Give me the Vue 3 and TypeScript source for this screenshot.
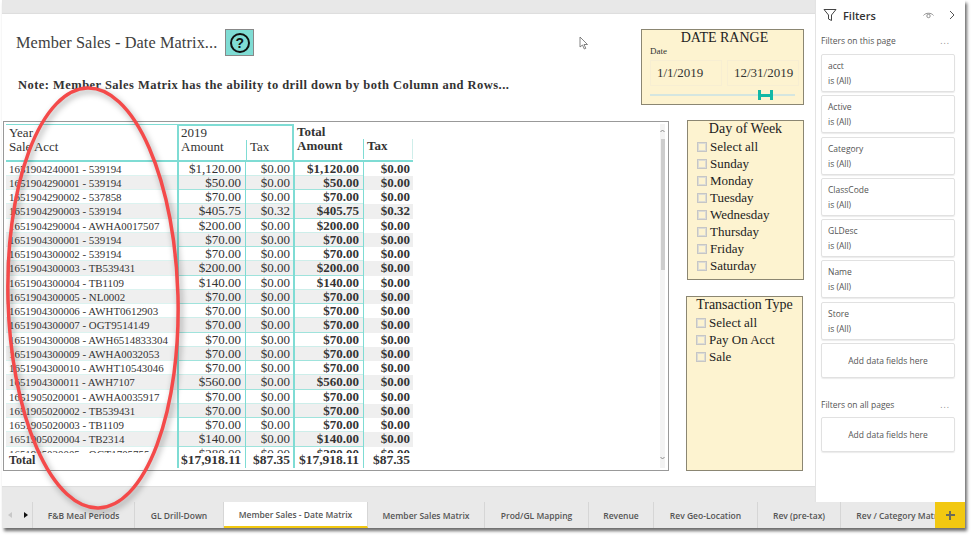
<script setup lang="ts">
interface SalesRow {
  label: string
  amount: string
  tax: string
}

interface TabItem {
  name: string
  width: number
  active?: boolean
}

const amounts: [string, string, string?][] = [
  ['1651904240001 - 539194', '$1,120.00'],
  ['1651904290001 - 539194', '$50.00'],
  ['1651904290002 - 537858', '$70.00'],
  ['1651904290003 - 539194', '$405.75', '$0.32'],
  ['1651904290004 - AWHA0017507', '$200.00'],
  ['1651904300001 - 539194', '$70.00'],
  ['1651904300002 - 539194', '$70.00'],
  ['1651904300003 - TB539431', '$200.00'],
  ['1651904300004 - TB1109', '$140.00'],
  ['1651904300005 - NL0002', '$70.00'],
  ['1651904300006 - AWHT0612903', '$70.00'],
  ['1651904300007 - OGT9514149', '$70.00'],
  ['1651904300008 - AWH6514833304', '$70.00'],
  ['1651904300009 - AWHA0032053', '$70.00'],
  ['1651904300010 - AWHT10543046', '$70.00'],
  ['1651904300011 - AWH7107', '$560.00'],
  ['1651905020001 - AWHA0035917', '$70.00'],
  ['1651905020002 - TB539431', '$70.00'],
  ['1651905020003 - TB1109', '$70.00'],
  ['1651905020004 - TB2314', '$140.00'],
  ['1651905020005 - OGT1705755', '$280.00'],
]

const rows: SalesRow[] = amounts.map(([label, amount, tax]) => ({
  label,
  amount,
  tax: tax ?? '$0.00',
}))

const days = ['Select all', 'Sunday', 'Monday', 'Tuesday', 'Wednesday', 'Thursday', 'Friday', 'Saturday']
const transactionTypes = ['Select all', 'Pay On Acct', 'Sale']
const filters = ['acct', 'Active', 'Category', 'ClassCode', 'GLDesc', 'Name', 'Store']

const tabs: TabItem[] = [
  { name: 'F&B Meal Periods', width: 102 },
  { name: 'GL Drill-Down', width: 89 },
  { name: 'Member Sales - Date Matrix', width: 144, active: true },
  { name: 'Member Sales Matrix', width: 117 },
  { name: 'Prod/GL Mapping', width: 104 },
  { name: 'Revenue', width: 65 },
  { name: 'Rev Geo-Location', width: 104 },
  { name: 'Rev (pre-tax)', width: 83 },
  { name: 'Rev / Category Matrix', width: 120 },
]
</script>

<template>
  <div class="shot">
    <div class="window">
      <div class="main">
        <section class="canvas">
          <div class="band"></div>
          <div class="page">
            <div class="top-row">
              <div class="heading">
                <div class="title-line">
                  <h1 class="title">Member Sales - Date Matrix...</h1>
                  <button type="button" class="help"><span class="help-ring">?</span></button>
                </div>
                <p class="note">Note: Member Sales Matrix has the ability to drill down by both Column and Rows...</p>
              </div>

              <div class="date-card">
                <div class="card-title">DATE RANGE</div>
                <div class="date-label">Date</div>
                <div class="date-inputs">
                  <span class="date-input">1/1/2019</span>
                  <span class="date-input">12/31/2019</span>
                </div>
                <div class="slider">
                  <span class="slider-handle"></span>
                </div>
              </div>
            </div>

            <div class="bottom-row">
              <div class="visual">
                <div class="matrix">
                  <div class="head">
                    <div class="h-label">
                      <span>Year</span>
                      <span>Sale Acct</span>
                    </div>
                    <div class="h-year">
                      <span class="h-year-name">2019</span>
                      <div class="h-pair">
                        <span class="h-amount">Amount</span>
                        <span class="h-tax">Tax</span>
                      </div>
                    </div>
                    <div class="h-total">
                      <span class="h-total-name">Total</span>
                      <div class="h-pair">
                        <span class="h-t-amount">Amount</span>
                        <span class="h-t-tax">Tax</span>
                      </div>
                    </div>
                  </div>

                  <div class="body">
                    <div v-for="(row, i) in rows" :key="row.label" class="row" :class="{ shade: i % 2 === 1 }">
                      <span class="c-label">{{ row.label }}</span>
                      <span class="c-amount">{{ row.amount }}</span>
                      <span class="c-tax">{{ row.tax }}</span>
                      <span class="c-t-amount">{{ row.amount }}</span>
                      <span class="c-t-tax">{{ row.tax }}</span>
                    </div>
                  </div>

                  <div class="row total">
                    <span class="c-label">Total</span>
                    <span class="c-amount">$17,918.11</span>
                    <span class="c-tax">$87.35</span>
                    <span class="c-t-amount">$17,918.11</span>
                    <span class="c-t-tax">$87.35</span>
                  </div>
                </div>

                <div class="scrollbar">
                  <svg class="arrow" width="5" height="4" viewBox="0 0 5 4"><path d="M.5 3 2.5 1 4.500 3" fill="none" stroke="#888" /></svg>
                  <span class="thumb"></span>
                  <svg class="arrow arrow-down" width="5" height="4" viewBox="0 0 5 4"><path d="M.5 1 2.5 3 4.500 1" fill="none" stroke="#888" /></svg>
                </div>
              </div>

              <div class="slicers">
                <div class="slicer day">
                  <div class="card-title">Day of Week</div>
                  <ul class="options">
                    <li v-for="day in days" :key="day"><i class="check"></i>{{ day }}</li>
                  </ul>
                </div>
                <div class="slicer type">
                  <div class="card-title">Transaction Type</div>
                  <ul class="options">
                    <li v-for="kind in transactionTypes" :key="kind"><i class="check"></i>{{ kind }}</li>
                  </ul>
                </div>
              </div>
            </div>
          </div>
          <div class="foot"></div>
        </section>

        <aside class="filters">
          <div class="filters-head">
            <svg width="14" height="14" viewBox="0 0 14 14" class="funnel">
              <path d="M1 1.500h12L8.500 7v5.500l-3-1.500V7Z" fill="none" stroke="#444" stroke-width="1" />
            </svg>
            <span class="filters-title">Filters</span>
            <svg width="11" height="8" viewBox="0 0 11 8" class="eye">
              <path d="M.5 4.500C2.500 1.500 8.500 1.500 10.500 4.500" fill="none" stroke="#777" stroke-width=".8" />
              <circle cx="5.500" cy="5" r="1.700" fill="none" stroke="#777" stroke-width=".8" />
            </svg>
            <svg width="6" height="10" viewBox="0 0 6 10" class="chevron">
              <path d="M1 1l4 4-4 4" fill="none" stroke="#555" stroke-width="1" />
            </svg>
          </div>

          <div class="section-line">
            <span>Filters on this page</span>
            <span class="dots">...</span>
          </div>
          <div class="filter-list">
            <div v-for="name in filters" :key="name" class="filter-card">
              <span>{{ name }}</span>
              <span>is (All)</span>
            </div>
            <div class="filter-card add">Add data fields here</div>
          </div>

          <div class="section-line all-pages">
            <span>Filters on all pages</span>
            <span class="dots">...</span>
          </div>
          <div class="filter-list">
            <div class="filter-card add">Add data fields here</div>
          </div>
        </aside>
      </div>

      <nav class="tabs">
        <div class="tab-nav">
          <i class="nav-left"></i>
          <i class="nav-right"></i>
        </div>
        <div class="tab-list">
          <div
            v-for="tab in tabs"
            :key="tab.name"
            class="tab"
            :class="{ active: tab.active }"
            :style="{ width: `${tab.width}px` }"
          >
            <span>{{ tab.name }}</span>
          </div>
        </div>
        <div class="add-tab">
          <span class="plus"></span>
        </div>
      </nav>
    </div>

    <!-- annotation drawn on top of the screenshot -->
    <svg class="ink" width="974" height="540" viewBox="0 0 974 540">
      <ellipse cx="93" cy="298" rx="85" ry="210" transform="rotate(-1.500 93 298)" fill="none" stroke="#f44a4a" stroke-width="3.500" />
    </svg>
    <svg class="cursor" width="10" height="14" viewBox="0 0 10 14">
      <path d="M1 1v10l2.500-2 1.800 4 1.500-.7-1.800-3.800H8.500Z" fill="#fff" stroke="#666" stroke-width=".8" />
    </svg>
  </div>
</template>

<style scoped>
.shot {
  position: relative;
  width: 974px;
  height: 540px;
  overflow: hidden;
  background: #fff;
  font-family: "Liberation Serif", "Times New Roman", serif;
  color: #333;
}

.window {
  width: 963px;
  height: 528px;
  margin-left: 2px;
  display: flex;
  flex-direction: column;
  box-shadow: 2px 3px 3px rgba(60, 60, 60, 0.75);
}

.main {
  display: flex;
  height: 502px;
}

.canvas {
  width: 813px;
  display: flex;
  flex-direction: column;
}

.band {
  height: 14px;
  background: #e8e8e8;
  box-shadow: inset 0 -1px 1px #ddd;
}

.page {
  height: 472px;
  padding-top: 15px;
  box-sizing: border-box;
  background: #fff;
}

.foot {
  height: 16px;
  background: #e9e9e9;
  box-shadow: inset 0 1px 1px #ddd;
}

.top-row {
  display: flex;
  justify-content: space-between;
  height: 76px;
  padding-right: 11px;
}

.heading {
  padding-left: 14px;
}

.title-line {
  display: flex;
  align-items: center;
  gap: 8px;
  height: 27px;
}

.title {
  margin: 0;
  font-size: 16.300px;
  font-weight: 400;
  color: #404040;
  letter-spacing: 0.1px;
}

.help {
  width: 29px;
  height: 27px;
  padding: 0;
  display: grid;
  place-items: center;
  background: #7fdcd4;
  border: 1px solid #888;
}

.help-ring {
  width: 16px;
  height: 16px;
  display: grid;
  place-items: center;
  border: 2px solid #111;
  border-radius: 50%;
  font: 700 14px/1 "Liberation Sans", Arial, sans-serif;
  color: #111;
}

.note {
  margin: 21px 0 0 2px;
  font-size: 12.500px;
  line-height: 16px;
  font-weight: 700;
  color: #333;
  letter-spacing: 0.46px;
  white-space: nowrap;
}

.date-card {
  width: 163px;
  box-sizing: border-box;
  padding: 0 4px 0 8px;
  background: #fdf3d0;
  border: 1px solid #8b8672;
}

.card-title {
  text-align: center;
  font-size: 14px;
  line-height: 15px;
  color: #222;
}

.date-label {
  font-size: 9px;
  line-height: 11px;
  margin-top: 1px;
  color: #333;
}

.date-inputs {
  display: flex;
  gap: 5px;
  margin-top: 3px;
}

.date-input {
  flex: 1;
  height: 26px;
  box-sizing: border-box;
  border: 1px solid #f7eed2;
  padding-left: 6px;
  font-size: 13px;
  line-height: 24px;
  color: #333;
  white-space: nowrap;
}

.slider {
  position: relative;
  height: 2px;
  width: 145px;
  margin-top: 8px;
  background: #d5e6e0;
}

.slider-handle {
  position: absolute;
  left: 108px;
  top: -4px;
  width: 9px;
  height: 10px;
  border-left: 3px solid #12b8a6;
  border-right: 3px solid #12b8a6;
  background: linear-gradient(#12b8a6, #12b8a6) center / 100% 3px no-repeat;
}

.bottom-row {
  display: flex;
  margin-top: 15px;
}

.visual {
  display: flex;
  width: 666px;
  height: 350px;
  margin: 1px 0 0 1px;
  padding: 2px 3px 2px 2px;
  box-sizing: border-box;
  border: 1.500px solid #999;
  background: #fff;
}

.matrix {
  width: 407px;
  display: flex;
  flex-direction: column;
  font-size: 13px;
  color: #333;
}

.head {
  display: grid;
  grid-template-columns: 171px 116px 120px;
  height: 35.500px;
  border-bottom: 2px solid #7fdcd4;
  box-sizing: content-box;
}

.h-label {
  display: flex;
  flex-direction: column;
  padding: 1px 0 0 3px;
  border-top: 1px solid #7fdcd4;
  line-height: 14px;
}

.h-year {
  border-top: 2px solid #7fdcd4;
  border-left: 2px solid #7fdcd4;
  border-right: 2px solid #7fdcd4;
  margin-right: -1px;
}

.h-year-name,
.h-total-name {
  display: block;
  height: 14px;
  line-height: 13px;
  padding-left: 2px;
}

.h-total {
  font-weight: 700;
  padding-top: 1px;
  margin-left: 1px;
}

.h-total-name,
.h-t-amount {
  padding-left: 3px;
}

.h-pair {
  display: flex;
  height: 19.500px;
  line-height: 14px;
}

.h-amount {
  padding-left: 2px;
  box-sizing: border-box;
  width: 67px;
}

.h-t-amount {
  box-sizing: border-box;
  width: 69px;
}

.h-tax,
.h-t-tax {
  padding-left: 3px;
  border-left: 1px solid #7fdcd4;
  box-sizing: border-box;
}

.h-tax {
  flex: 1;
}

.h-t-tax {
  flex: 1;
  border-right: 1px solid #cfeeea;
}

.body {
  height: 292px;
  overflow: hidden;
}

.row {
  display: grid;
  grid-template-columns: 171px 68px 48px 70px 50px;
  height: 14.250px;
  line-height: 14px;
  box-sizing: border-box;
  white-space: nowrap;
}

.row span {
  padding-right: 3px;
  text-align: right;
  box-shadow: inset 0 -1px 0 #cdeeea;
}

.row.shade span {
  background: #efefef;
  box-shadow: inset 0 -1px 0 #9fe3dc;
}

.row .c-label,
.row.shade .c-label {
  padding-left: 3px;
  text-align: left;
  font-size: 10.900px;
  box-shadow: inset 0 -1px 0 #dcf3f0;
}

.row .c-amount {
  border-left: 2px solid #7fdcd4;
  padding-right: 4px;
}

.row .c-tax {
  border-left: 1px solid #7fdcd4;
}

.row .c-t-amount {
  border-left: 2px solid #7fdcd4;
  padding-right: 4px;
  font-weight: 700;
}

.row .c-t-tax,
.row.shade .c-t-tax {
  border-left: 1px solid #7fdcd4;
  font-weight: 700;
  box-shadow: none;
}

.row.total {
  height: 15px;
  font-weight: 700;
}

.row.total span {
  box-shadow: none;
  font-size: 13.500px;
}

.row.total .c-label {
  font-size: 12px;
  padding-left: 3px;
}

.scrollbar {
  margin-left: auto;
  width: 5px;
  display: flex;
  flex-direction: column;
  align-items: center;
  background: #f3f3f3;
}

.arrow {
  margin-top: 5px;
}

.thumb {
  width: 4px;
  height: 131px;
  margin-top: 6px;
  background: #cdcdcd;
}

.arrow-down {
  margin-top: auto;
  margin-bottom: 8px;
}

.slicers {
  display: flex;
  flex-direction: column;
  gap: 16px;
  margin-left: 17px;
}

.slicer {
  box-sizing: border-box;
  background: #fdf3d0;
  border: 1px solid #8b8672;
}

.slicer.day {
  width: 117px;
  height: 160px;
  margin-left: 1px;
}

.slicer.type {
  width: 117px;
  height: 175px;
}

.options {
  margin: 2px 0 0;
  padding: 0 0 0 9px;
  list-style: none;
  font-size: 13px;
  color: #222;
}

.options li {
  display: flex;
  align-items: center;
  gap: 3px;
  height: 17px;
}

.check {
  width: 8px;
  height: 8px;
  border: 1px solid #c6c6c6;
  box-shadow: inset 0 0 0 1px #dcdcd6;
}

.filters {
  width: 150px;
  box-sizing: border-box;
  padding: 0 10px 0 5px;
  background: #fff;
  border-left: 1px solid #e3e3e3;
  font-family: "Open Sans", "Noto Sans", sans-serif;
  font-size: 8.500px;
  color: #555;
}

.filters-head {
  display: flex;
  align-items: center;
  height: 30px;
  padding-left: 2px;
}

.funnel {
  margin-right: 6px;
}

.filters-title {
  font-size: 11px;
  font-weight: 600;
  color: #333;
}

.eye {
  margin-left: auto;
}

.chevron {
  margin: 0 0 0 15px;
}

.section-line {
  display: flex;
  justify-content: space-between;
  height: 24px;
  line-height: 22px;
  padding-right: 5px;
}

.all-pages {
  margin-top: 16px;
  height: 23px;
}

.dots {
  letter-spacing: 1px;
  color: #888;
}

.filter-list {
  display: flex;
  flex-direction: column;
  gap: 3.300px;
}

.filter-card {
  height: 38px;
  display: flex;
  flex-direction: column;
  justify-content: center;
  gap: 4px;
  padding-left: 6px;
  box-sizing: border-box;
  line-height: 11px;
  border: 1px solid #e1e1e1;
  border-radius: 2px;
  box-shadow: 0 1px 1px #ececec;
}

.filter-card.add {
  height: 35px;
  padding-left: 0;
  align-items: center;
}

.tabs {
  display: flex;
  height: 26px;
  background: #e9e9e9;
}

.tab-nav {
  width: 31px;
  display: flex;
  align-items: center;
  gap: 12px;
  padding-left: 6px;
  box-sizing: border-box;
  border-right: 1px solid #d6d6d6;
}

.nav-left {
  border-right: 4px solid #c8c8c8;
  border-top: 3px solid transparent;
  border-bottom: 3px solid transparent;
}

.nav-right {
  border-left: 4px solid #111;
  border-top: 3px solid transparent;
  border-bottom: 3px solid transparent;
}

.tab-list {
  flex: 1;
  min-width: 0;
  display: flex;
  overflow: hidden;
}

.tab {
  flex: none;
  display: flex;
  align-items: center;
  justify-content: center;
  overflow: hidden;
  box-sizing: border-box;
  border-right: 1px solid #d6d6d6;
  font-family: "Open Sans", "Noto Sans", sans-serif;
  font-size: 8.500px;
  font-weight: 600;
  color: #555;
  white-space: nowrap;
}

.tab.active {
  background: #fff;
  border-bottom: 2px solid #f2c811;
}

.add-tab {
  width: 30px;
  display: grid;
  place-items: center;
  background: #f2c811;
}

.plus {
  width: 9px;
  height: 9px;
  background:
    linear-gradient(#6b6b5a, #6b6b5a) center / 100% 2px no-repeat,
    linear-gradient(#6b6b5a, #6b6b5a) center / 2px 100% no-repeat;
}

.ink {
  position: absolute;
  inset: 0;
  pointer-events: none;
  filter: drop-shadow(2px 3px 3px rgba(0, 0, 0, 0.35));
}

.cursor {
  position: absolute;
  left: 579px;
  top: 36px;
}
</style>
